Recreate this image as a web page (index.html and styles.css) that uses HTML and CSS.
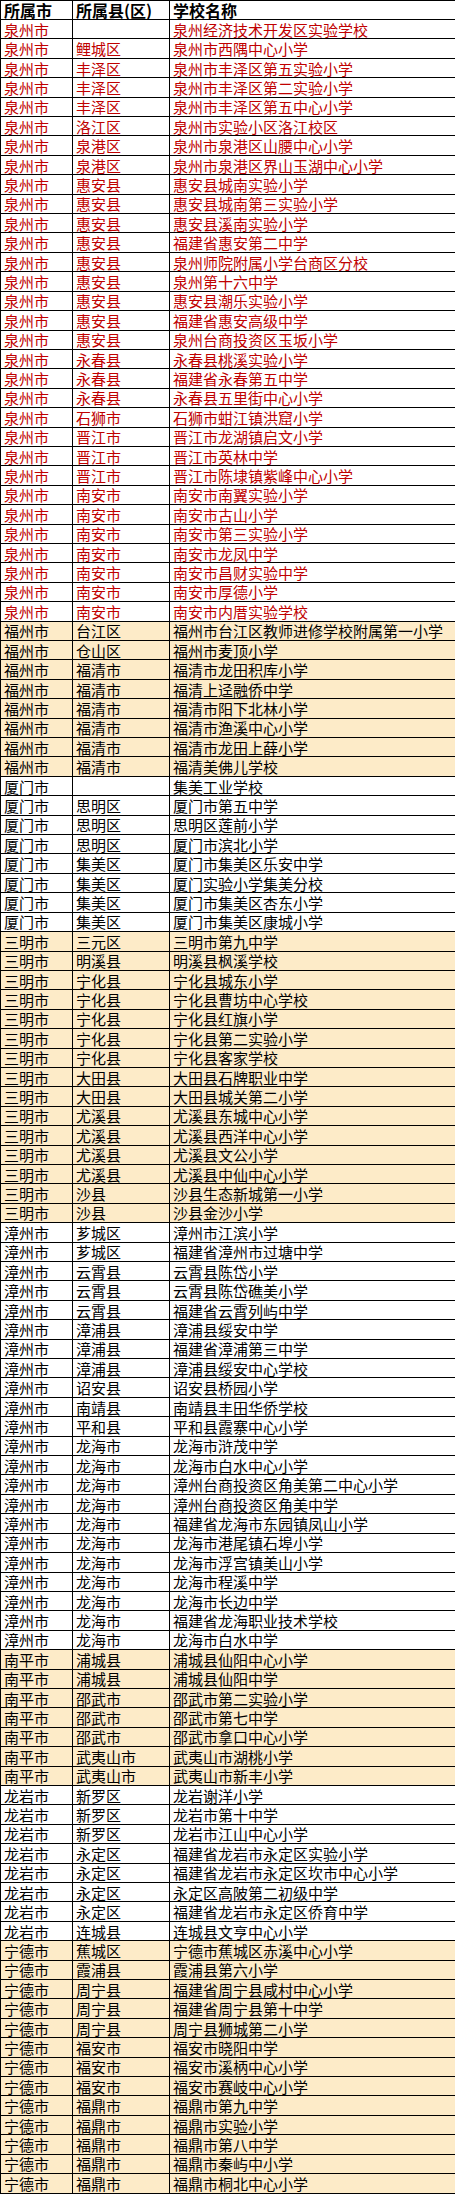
FILE: index.html
```html
<!DOCTYPE html>
<html lang="zh-CN">
<head>
<meta charset="utf-8">
<title>学校名单</title>
<link rel="stylesheet" href="styles.css">
</head>
<body>
<table class="list">
<colgroup><col class="c1"><col class="c2"><col class="c3"></colgroup>
<thead>
<tr class="head"><th>所属市</th><th>所属县(区)</th><th>学校名称</th></tr>
</thead>
<tbody>
<tr class="red"><td>泉州市</td><td></td><td>泉州经济技术开发区实验学校</td></tr>
<tr class="red"><td>泉州市</td><td>鲤城区</td><td>泉州市西隅中心小学</td></tr>
<tr class="red"><td>泉州市</td><td>丰泽区</td><td>泉州市丰泽区第五实验小学</td></tr>
<tr class="red"><td>泉州市</td><td>丰泽区</td><td>泉州市丰泽区第二实验小学</td></tr>
<tr class="red"><td>泉州市</td><td>丰泽区</td><td>泉州市丰泽区第五中心小学</td></tr>
<tr class="red"><td>泉州市</td><td>洛江区</td><td>泉州市实验小区洛江校区</td></tr>
<tr class="red"><td>泉州市</td><td>泉港区</td><td>泉州市泉港区山腰中心小学</td></tr>
<tr class="red"><td>泉州市</td><td>泉港区</td><td>泉州市泉港区界山玉湖中心小学</td></tr>
<tr class="red"><td>泉州市</td><td>惠安县</td><td>惠安县城南实验小学</td></tr>
<tr class="red"><td>泉州市</td><td>惠安县</td><td>惠安县城南第三实验小学</td></tr>
<tr class="red"><td>泉州市</td><td>惠安县</td><td>惠安县溪南实验小学</td></tr>
<tr class="red"><td>泉州市</td><td>惠安县</td><td>福建省惠安第二中学</td></tr>
<tr class="red"><td>泉州市</td><td>惠安县</td><td>泉州师院附属小学台商区分校</td></tr>
<tr class="red"><td>泉州市</td><td>惠安县</td><td>泉州第十六中学</td></tr>
<tr class="red"><td>泉州市</td><td>惠安县</td><td>惠安县潮乐实验小学</td></tr>
<tr class="red"><td>泉州市</td><td>惠安县</td><td>福建省惠安高级中学</td></tr>
<tr class="red"><td>泉州市</td><td>惠安县</td><td>泉州台商投资区玉坂小学</td></tr>
<tr class="red"><td>泉州市</td><td>永春县</td><td>永春县桃溪实验小学</td></tr>
<tr class="red"><td>泉州市</td><td>永春县</td><td>福建省永春第五中学</td></tr>
<tr class="red"><td>泉州市</td><td>永春县</td><td>永春县五里街中心小学</td></tr>
<tr class="red"><td>泉州市</td><td>石狮市</td><td>石狮市蚶江镇洪窟小学</td></tr>
<tr class="red"><td>泉州市</td><td>晋江市</td><td>晋江市龙湖镇启文小学</td></tr>
<tr class="red"><td>泉州市</td><td>晋江市</td><td>晋江市英林中学</td></tr>
<tr class="red"><td>泉州市</td><td>晋江市</td><td>晋江市陈埭镇紫峰中心小学</td></tr>
<tr class="red"><td>泉州市</td><td>南安市</td><td>南安市南翼实验小学</td></tr>
<tr class="red"><td>泉州市</td><td>南安市</td><td>南安市古山小学</td></tr>
<tr class="red"><td>泉州市</td><td>南安市</td><td>南安市第三实验小学</td></tr>
<tr class="red"><td>泉州市</td><td>南安市</td><td>南安市龙凤中学</td></tr>
<tr class="red"><td>泉州市</td><td>南安市</td><td>南安市昌财实验中学</td></tr>
<tr class="red"><td>泉州市</td><td>南安市</td><td>南安市厚德小学</td></tr>
<tr class="red"><td>泉州市</td><td>南安市</td><td>南安市内厝实验学校</td></tr>
<tr class="tan"><td>福州市</td><td>台江区</td><td>福州市台江区教师进修学校附属第一小学</td></tr>
<tr class="tan"><td>福州市</td><td>仓山区</td><td>福州市麦顶小学</td></tr>
<tr class="tan"><td>福州市</td><td>福清市</td><td>福清市龙田积库小学</td></tr>
<tr class="tan"><td>福州市</td><td>福清市</td><td>福清上迳融侨中学</td></tr>
<tr class="tan"><td>福州市</td><td>福清市</td><td>福清市阳下北林小学</td></tr>
<tr class="tan"><td>福州市</td><td>福清市</td><td>福清市渔溪中心小学</td></tr>
<tr class="tan"><td>福州市</td><td>福清市</td><td>福清市龙田上薛小学</td></tr>
<tr class="tan"><td>福州市</td><td>福清市</td><td>福清美佛儿学校</td></tr>
<tr><td>厦门市</td><td></td><td>集美工业学校</td></tr>
<tr><td>厦门市</td><td>思明区</td><td>厦门市第五中学</td></tr>
<tr><td>厦门市</td><td>思明区</td><td>思明区莲前小学</td></tr>
<tr><td>厦门市</td><td>思明区</td><td>厦门市滨北小学</td></tr>
<tr><td>厦门市</td><td>集美区</td><td>厦门市集美区乐安中学</td></tr>
<tr><td>厦门市</td><td>集美区</td><td>厦门实验小学集美分校</td></tr>
<tr><td>厦门市</td><td>集美区</td><td>厦门市集美区杏东小学</td></tr>
<tr><td>厦门市</td><td>集美区</td><td>厦门市集美区康城小学</td></tr>
<tr class="tan"><td>三明市</td><td>三元区</td><td>三明市第九中学</td></tr>
<tr class="tan"><td>三明市</td><td>明溪县</td><td>明溪县枫溪学校</td></tr>
<tr class="tan"><td>三明市</td><td>宁化县</td><td>宁化县城东小学</td></tr>
<tr class="tan"><td>三明市</td><td>宁化县</td><td>宁化县曹坊中心学校</td></tr>
<tr class="tan"><td>三明市</td><td>宁化县</td><td>宁化县红旗小学</td></tr>
<tr class="tan"><td>三明市</td><td>宁化县</td><td>宁化县第二实验小学</td></tr>
<tr class="tan"><td>三明市</td><td>宁化县</td><td>宁化县客家学校</td></tr>
<tr class="tan"><td>三明市</td><td>大田县</td><td>大田县石牌职业中学</td></tr>
<tr class="tan"><td>三明市</td><td>大田县</td><td>大田县城关第二小学</td></tr>
<tr class="tan"><td>三明市</td><td>尤溪县</td><td>尤溪县东城中心小学</td></tr>
<tr class="tan"><td>三明市</td><td>尤溪县</td><td>尤溪县西洋中心小学</td></tr>
<tr class="tan"><td>三明市</td><td>尤溪县</td><td>尤溪县文公小学</td></tr>
<tr class="tan"><td>三明市</td><td>尤溪县</td><td>尤溪县中仙中心小学</td></tr>
<tr class="tan"><td>三明市</td><td>沙县</td><td>沙县生态新城第一小学</td></tr>
<tr class="tan"><td>三明市</td><td>沙县</td><td>沙县金沙小学</td></tr>
<tr><td>漳州市</td><td>芗城区</td><td>漳州市江滨小学</td></tr>
<tr><td>漳州市</td><td>芗城区</td><td>福建省漳州市过塘中学</td></tr>
<tr><td>漳州市</td><td>云霄县</td><td>云霄县陈岱小学</td></tr>
<tr><td>漳州市</td><td>云霄县</td><td>云霄县陈岱礁美小学</td></tr>
<tr><td>漳州市</td><td>云霄县</td><td>福建省云霄列屿中学</td></tr>
<tr><td>漳州市</td><td>漳浦县</td><td>漳浦县绥安中学</td></tr>
<tr><td>漳州市</td><td>漳浦县</td><td>福建省漳浦第三中学</td></tr>
<tr><td>漳州市</td><td>漳浦县</td><td>漳浦县绥安中心学校</td></tr>
<tr><td>漳州市</td><td>诏安县</td><td>诏安县桥园小学</td></tr>
<tr><td>漳州市</td><td>南靖县</td><td>南靖县丰田华侨学校</td></tr>
<tr><td>漳州市</td><td>平和县</td><td>平和县霞寨中心小学</td></tr>
<tr><td>漳州市</td><td>龙海市</td><td>龙海市浒茂中学</td></tr>
<tr><td>漳州市</td><td>龙海市</td><td>龙海市白水中心小学</td></tr>
<tr><td>漳州市</td><td>龙海市</td><td>漳州台商投资区角美第二中心小学</td></tr>
<tr><td>漳州市</td><td>龙海市</td><td>漳州台商投资区角美中学</td></tr>
<tr><td>漳州市</td><td>龙海市</td><td>福建省龙海市东园镇凤山小学</td></tr>
<tr><td>漳州市</td><td>龙海市</td><td>龙海市港尾镇石埠小学</td></tr>
<tr><td>漳州市</td><td>龙海市</td><td>龙海市浮宫镇美山小学</td></tr>
<tr><td>漳州市</td><td>龙海市</td><td>龙海市程溪中学</td></tr>
<tr><td>漳州市</td><td>龙海市</td><td>龙海市长边中学</td></tr>
<tr><td>漳州市</td><td>龙海市</td><td>福建省龙海职业技术学校</td></tr>
<tr><td>漳州市</td><td>龙海市</td><td>龙海市白水中学</td></tr>
<tr class="tan"><td>南平市</td><td>浦城县</td><td>浦城县仙阳中心小学</td></tr>
<tr class="tan"><td>南平市</td><td>浦城县</td><td>浦城县仙阳中学</td></tr>
<tr class="tan"><td>南平市</td><td>邵武市</td><td>邵武市第二实验小学</td></tr>
<tr class="tan"><td>南平市</td><td>邵武市</td><td>邵武市第七中学</td></tr>
<tr class="tan"><td>南平市</td><td>邵武市</td><td>邵武市拿口中心小学</td></tr>
<tr class="tan"><td>南平市</td><td>武夷山市</td><td>武夷山市湖桃小学</td></tr>
<tr class="tan"><td>南平市</td><td>武夷山市</td><td>武夷山市新丰小学</td></tr>
<tr><td>龙岩市</td><td>新罗区</td><td>龙岩谢洋小学</td></tr>
<tr><td>龙岩市</td><td>新罗区</td><td>龙岩市第十中学</td></tr>
<tr><td>龙岩市</td><td>新罗区</td><td>龙岩市江山中心小学</td></tr>
<tr><td>龙岩市</td><td>永定区</td><td>福建省龙岩市永定区实验小学</td></tr>
<tr><td>龙岩市</td><td>永定区</td><td>福建省龙岩市永定区坎市中心小学</td></tr>
<tr><td>龙岩市</td><td>永定区</td><td>永定区高陂第二初级中学</td></tr>
<tr><td>龙岩市</td><td>永定区</td><td>福建省龙岩市永定区侨育中学</td></tr>
<tr><td>龙岩市</td><td>连城县</td><td>连城县文亨中心小学</td></tr>
<tr class="tan"><td>宁德市</td><td>蕉城区</td><td>宁德市蕉城区赤溪中心小学</td></tr>
<tr class="tan"><td>宁德市</td><td>霞浦县</td><td>霞浦县第六小学</td></tr>
<tr class="tan"><td>宁德市</td><td>周宁县</td><td>福建省周宁县咸村中心小学</td></tr>
<tr class="tan"><td>宁德市</td><td>周宁县</td><td>福建省周宁县第十中学</td></tr>
<tr class="tan"><td>宁德市</td><td>周宁县</td><td>周宁县狮城第二小学</td></tr>
<tr class="tan"><td>宁德市</td><td>福安市</td><td>福安市晓阳中学</td></tr>
<tr class="tan"><td>宁德市</td><td>福安市</td><td>福安市溪柄中心小学</td></tr>
<tr class="tan"><td>宁德市</td><td>福安市</td><td>福安市赛岐中心小学</td></tr>
<tr class="tan"><td>宁德市</td><td>福鼎市</td><td>福鼎市第九中学</td></tr>
<tr class="tan"><td>宁德市</td><td>福鼎市</td><td>福鼎市实验小学</td></tr>
<tr class="tan"><td>宁德市</td><td>福鼎市</td><td>福鼎市第八中学</td></tr>
<tr class="tan"><td>宁德市</td><td>福鼎市</td><td>福鼎市秦屿中小学</td></tr>
<tr class="tan"><td>宁德市</td><td>福鼎市</td><td>福鼎市桐北中心小学</td></tr>
</tbody>
</table>
</body>
</html>
```

FILE: styles.css
```css
html, body {
  margin: 0;
  padding: 0;
  background: #ffffff;
}

body {
  font-family: "Noto Sans CJK SC", "Noto Sans", sans-serif;
  color: #000000;
}

.list {
  width: 455px;
  border-collapse: collapse;
  table-layout: fixed;
}

.c1 { width: 72px; }
.c2 { width: 97px; }
.c3 { width: 286px; }

.list th,
.list td {
  border: 1px solid #000000;
  height: 19.42px;
  padding: 0 0 0 3px;
  box-sizing: border-box;
  text-align: left;
  vertical-align: middle;
  white-space: nowrap;
}

.list td {
  font-size: 15px;
  font-weight: 400;
  line-height: 17px;
  overflow: hidden;
}

.list th {
  font-size: 16px;
  font-weight: 700;
  line-height: 18px;
  height: 19px;
  overflow: visible;
}

.red td {
  color: #c00000;
}

.tan td {
  background: #fdebc8;
}
```
